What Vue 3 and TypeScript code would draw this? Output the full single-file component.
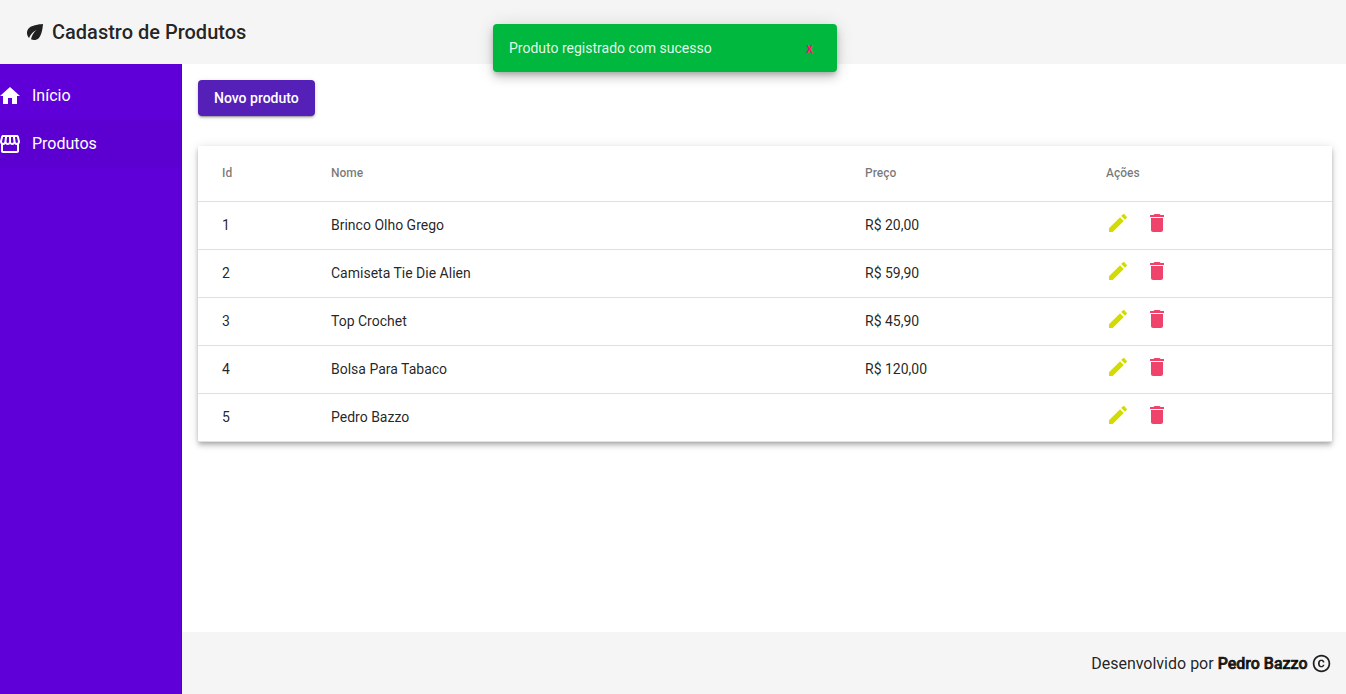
<script setup lang="ts">
interface Product {
  id: number
  name: string
  price: string
}

const products: Product[] = [
  { id: 1, name: 'Brinco Olho Grego', price: 'R$ 20,00' },
  { id: 2, name: 'Camiseta Tie Die Alien', price: 'R$ 59,90' },
  { id: 3, name: 'Top Crochet', price: 'R$ 45,90' },
  { id: 4, name: 'Bolsa Para Tabaco', price: 'R$ 120,00' },
  { id: 5, name: 'Pedro Bazzo', price: '' },
]
</script>

<template>
  <div class="page">
    <header class="toolbar">
      <svg class="icon" viewBox="0 0 24 24"><path d="M6.05 8.05c-2.73 2.73-2.73 7.15-.02 9.88 1.47-3.4 4.09-6.24 7.36-7.93-2.77 2.34-4.71 5.61-5.39 9.32 2.6 1.23 5.8.78 7.95-1.37C19.43 14.47 20 4 20 4S9.53 4.57 6.05 8.05z" /></svg>
      <span class="title">Cadastro de Produtos</span>
    </header>

    <div class="body">
      <nav class="sidenav">
        <a class="nav-item">
          <svg class="icon" viewBox="0 0 24 24"><path d="M10 20v-6h4v6h5v-8h3L12 3 2 12h3v8z" /></svg>
          <span>Início</span>
        </a>
        <a class="nav-item active">
          <svg class="icon" viewBox="0 0 24 24"><path d="M21.9 8.89l-1.05-4.37c-.22-.9-1-1.52-1.91-1.52H5.05c-.9 0-1.69.63-1.9 1.52L2.1 8.89c-.24 1.02-.02 2.06.62 2.88.08.11.19.19.28.29V19c0 1.1.9 2 2 2h14c1.1 0 2-.9 2-2v-6.94c.09-.09.2-.18.28-.28.64-.82.87-1.87.62-2.89zm-2.99-3.9l1.05 4.37c.1.42.01.84-.25 1.17-.14.18-.44.47-.94.47-.61 0-1.14-.49-1.21-1.14L16.98 5l1.93-.01zM13 5h1.96l.54 4.52c.05.39-.07.78-.33 1.07-.22.26-.54.41-.95.41-.67 0-1.22-.59-1.22-1.31V5zM8.49 9.52L9.04 5H11v4.69c0 .72-.55 1.31-1.29 1.31-.34 0-.65-.15-.89-.41-.25-.29-.37-.68-.33-1.07zm-4.45-.16L5.05 5h1.97l-.58 4.86c-.08.65-.6 1.14-1.21 1.14-.49 0-.8-.29-.93-.47-.27-.32-.36-.75-.26-1.17zM5 19v-6.03c.08.01.15.03.23.03.87 0 1.66-.36 2.24-.95.6.6 1.4.95 2.31.95.87 0 1.65-.36 2.23-.93.59.57 1.39.93 2.29.93.84 0 1.64-.35 2.24-.95.58.59 1.37.95 2.24.95.08 0 .15-.02.23-.03V19H5z" /></svg>
          <span>Produtos</span>
        </a>
      </nav>

      <div class="content">
        <main class="main">
          <button class="new-button" type="button">Novo produto</button>
          <section class="table">
            <div class="row head">
              <span>Id</span><span>Nome</span><span>Preço</span><span>Ações</span>
            </div>
            <div v-for="product in products" :key="product.id" class="row">
              <span>{{ product.id }}</span>
              <span>{{ product.name }}</span>
              <span>{{ product.price }}</span>
              <span class="actions">
                <svg class="icon edit" viewBox="0 0 24 24"><path d="M3 17.25V21h3.75L17.81 9.94l-3.75-3.75L3 17.25zM20.71 7.04c.39-.39.39-1.02 0-1.41l-2.34-2.34c-.39-.39-1.02-.39-1.41 0l-1.83 1.83 3.75 3.75 1.83-1.83z" /></svg>
                <svg class="icon delete" viewBox="0 0 24 24"><path d="M6 19c0 1.1.9 2 2 2h8c1.1 0 2-.9 2-2V7H6v12zM19 4h-3.5l-1-1h-5l-1 1H5v2h14V4z" /></svg>
              </span>
            </div>
          </section>
        </main>
        <footer class="footer">
          <span>Desenvolvido por <b class="author">Pedro Bazzo</b></span>
          <svg class="icon copyright" viewBox="0 0 24 24"><path d="M10.08 10.86c.05-.33.16-.62.3-.87s.34-.46.59-.62c.24-.15.54-.22.91-.23.23.01.44.05.63.13.2.09.38.21.52.36s.25.33.34.53.13.42.14.64h1.79c-.02-.47-.11-.9-.28-1.29s-.4-.73-.7-1.01-.66-.5-1.08-.66-.88-.23-1.39-.23c-.65 0-1.22.11-1.7.34s-.88.53-1.2.92-.56.84-.71 1.36S8 11.29 8 11.87v.27c0 .58.08 1.12.23 1.64s.39.97.71 1.35.72.69 1.2.91 1.05.34 1.7.34c.47 0 .91-.08 1.32-.23s.77-.36 1.08-.63.56-.58.74-.94.29-.74.3-1.15h-1.79c-.01.21-.06.4-.15.58s-.21.33-.36.46-.32.23-.52.3c-.19.07-.39.09-.6.1-.36-.01-.66-.08-.89-.23-.25-.16-.45-.37-.59-.62s-.25-.55-.3-.88-.08-.67-.08-1v-.27c0-.35.03-.68.08-1.01zM12 2C6.48 2 2 6.48 2 12s4.48 10 10 10 10-4.48 10-10S17.52 2 12 2zm0 18c-4.41 0-8-3.59-8-8s3.59-8 8-8 8 3.59 8 8-3.59 8-8 8z" /></svg>
        </footer>
      </div>
    </div>

    <div class="snackbar">
      <span>Produto registrado com sucesso</span>
      <button class="dismiss" type="button">x</button>
    </div>
  </div>
</template>

<style>
body {
  margin: 0;
  overflow: hidden;
}
</style>

<style scoped>
.page {
  display: flex;
  flex-direction: column;
  height: 100vh;
  background: #fff;
  color: rgba(0, 0, 0, 0.87);
  font-family: Roboto, sans-serif;
}
.icon {
  display: block;
  flex: none;
  width: 24px;
  height: 24px;
  fill: currentColor;
}
.toolbar {
  box-sizing: border-box;
  display: flex;
  flex: none;
  align-items: center;
  gap: 5px;
  height: 64px;
  padding-left: 23px;
  background: #f5f5f5;
}
.title {
  font-size: 20px;
  font-weight: 500;
  line-height: 32px;
}
.body {
  display: flex;
  flex: 1;
  min-height: 0;
}
.sidenav {
  box-sizing: border-box;
  flex: none;
  width: 182px;
  padding-top: 8px;
  border-right: 1px solid rgba(0, 0, 0, 0.12);
  background: #5f00d9;
  color: #fff;
}
.nav-item {
  box-sizing: border-box;
  display: flex;
  align-items: center;
  gap: 10px;
  height: 48px;
  margin-left: -2px;
  font-size: 16px;
}
.nav-item span {
  position: relative;
  top: -1px;
}
.active {
  background: rgba(0, 0, 0, 0.04);
}
.content {
  display: flex;
  flex: 1;
  flex-direction: column;
  min-width: 0;
}
.main {
  flex: 1;
  padding: 16px 14px 0 16px;
}
.new-button {
  display: block;
  height: 36px;
  padding: 0 16px;
  border: 0;
  border-radius: 4px;
  background: #5520b8;
  color: #fff;
  font: 500 14px/36px Roboto, sans-serif;
  box-shadow: 0 3px 1px -2px rgba(0, 0, 0, 0.2), 0 2px 2px 0 rgba(0, 0, 0, 0.14), 0 1px 5px 0 rgba(0, 0, 0, 0.12);
}
.table {
  margin-top: 30px;
  background: #fff;
  box-shadow: 0 2px 4px -1px rgba(0, 0, 0, 0.2), 0 4px 5px 0 rgba(0, 0, 0, 0.14), 0 1px 10px 0 rgba(0, 0, 0, 0.12);
}
.row {
  box-sizing: border-box;
  display: grid;
  grid-template-columns: 109px 534px 241px 1fr;
  align-items: center;
  height: 48px;
  padding: 0 24px 2px;
  border-bottom: 1px solid rgba(0, 0, 0, 0.12);
  font-size: 14px;
}
.head {
  height: 56px;
  color: rgba(0, 0, 0, 0.54);
  font-size: 12px;
  font-weight: 500;
}
.actions {
  display: flex;
  gap: 15px;
  padding-bottom: 4px;
}
.edit {
  color: #d3dc00;
}
.delete {
  color: #f0436b;
}
.footer {
  box-sizing: border-box;
  display: flex;
  flex: none;
  align-items: center;
  justify-content: flex-end;
  gap: 3.4px;
  height: 62px;
  padding-right: 14px;
  background: #f5f5f5;
  font-size: 16px;
}
.author {
  font-weight: 500;
  -webkit-text-stroke: 0.7px currentColor;
}
.copyright {
  width: 21px;
  height: 21px;
}
.snackbar {
  position: absolute;
  top: 24px;
  left: 493px;
  box-sizing: border-box;
  display: flex;
  align-items: center;
  justify-content: space-between;
  width: 344px;
  height: 48px;
  padding: 0 24px 0 16px;
  border-radius: 4px;
  background: #00b83d;
  color: rgba(255, 255, 255, 0.9);
  font-size: 14px;
  box-shadow: 0 3px 5px -1px rgba(0, 0, 0, 0.2), 0 6px 10px 0 rgba(0, 0, 0, 0.14), 0 1px 18px 0 rgba(0, 0, 0, 0.12);
}
.dismiss {
  padding: 0;
  border: 0;
  background: none;
  color: #ff1070;
  font: 500 14px/20px Roboto, sans-serif;
}
</style>
